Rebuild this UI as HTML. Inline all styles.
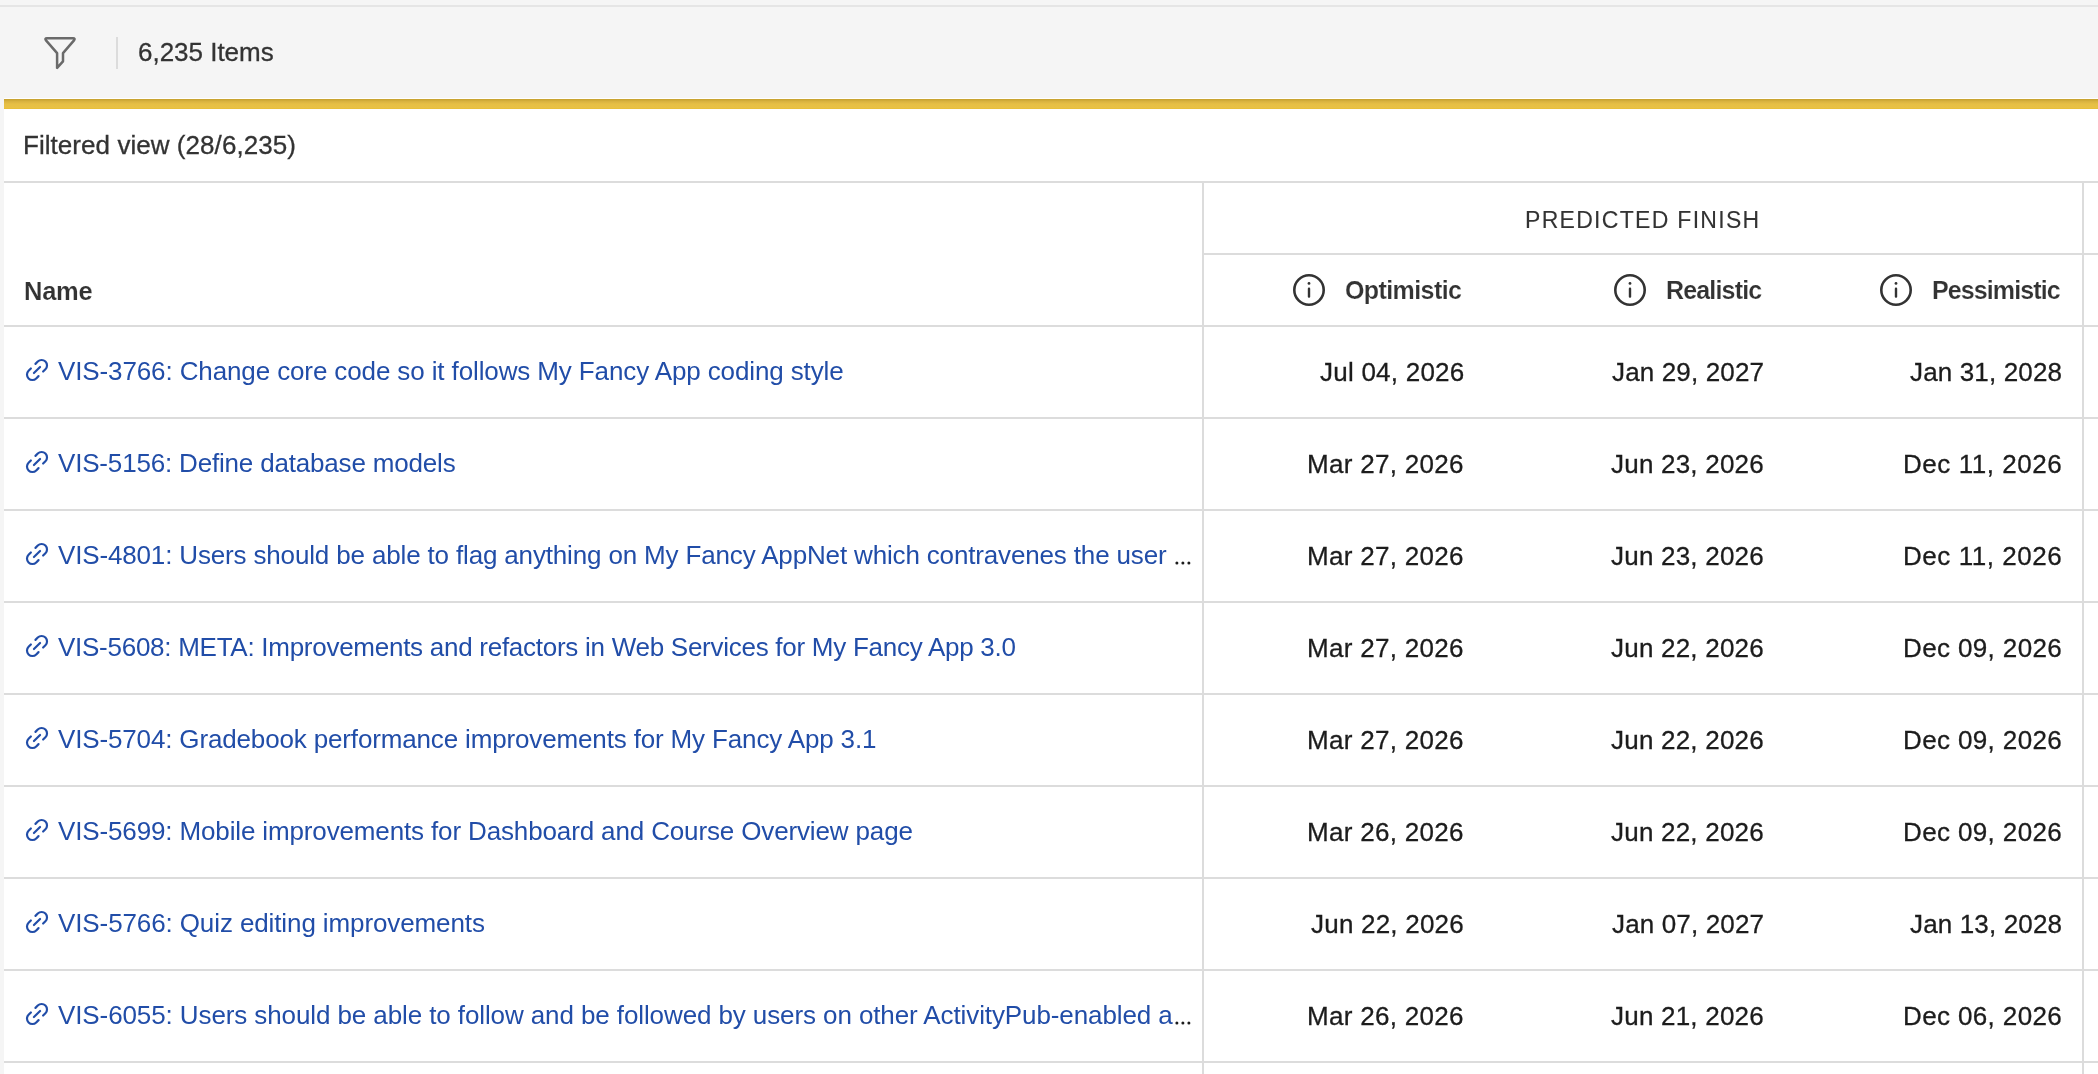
<!DOCTYPE html>
<html><head><meta charset="utf-8"><title>Items</title>
<style>
html,body{margin:0;padding:0}
body{width:2098px;height:1074px;overflow:hidden;position:relative;background:#f5f5f5;font-family:"Liberation Sans",sans-serif}
.t{will-change:transform;position:absolute;white-space:nowrap;line-height:40px;height:40px}
.h{position:absolute;right:0;height:2px;background:#dcdcdc}
.v{position:absolute;top:181px;bottom:0;width:2px;background:#dcdcdc}
.ic{position:absolute;display:block}
#topline{position:absolute;left:0;right:0;top:5px;height:2px;background:#e5e5e5}
#sep{position:absolute;left:116px;top:37px;width:2px;height:32px;background:#dcdcdc}
#panel{position:absolute;left:4px;right:0;top:98px;bottom:0;background:#fff}
#bar{position:absolute;left:4px;right:0;top:99px;height:10px;background:linear-gradient(#c5a02e 0,#d9b340 25%,#e6bf45 50%,#e9c245 90%,#e6bb33 100%)}
</style></head><body>
<div id="topline"></div>
<svg class="ic" style="left:40px;top:32px" width="40" height="40" viewBox="40 32 40 40" fill="none" stroke="#6a6a6a" stroke-width="2.5" stroke-linejoin="round" stroke-linecap="round"><path d="M47 38.3H73Q75.6 38.3 74 40.4L63 53.1V61.3L57.1 67.9V53.1L46 40.4Q44.4 38.3 47 38.3Z"/></svg>
<div id="sep"></div>
<div id="panel"></div>
<div id="bar"></div>
<div class="h" style="top:181px;left:4px"></div><div class="h" style="top:325px;left:4px"></div><div class="h" style="top:417px;left:4px"></div><div class="h" style="top:509px;left:4px"></div><div class="h" style="top:601px;left:4px"></div><div class="h" style="top:693px;left:4px"></div><div class="h" style="top:785px;left:4px"></div><div class="h" style="top:877px;left:4px"></div><div class="h" style="top:969px;left:4px"></div><div class="h" style="top:1061px;left:4px"></div><div class="h" style="top:253px;left:1202px"></div>
<div class="v" style="left:1202px"></div><div class="v" style="left:2082px"></div>
<svg class="ic" style="left:1172px;top:558.65px" width="22" height="8" viewBox="0 0 22 8" fill="#1c1c1c"><circle cx="4.9" cy="4" r="1.5"/><circle cx="10.9" cy="4" r="1.5"/><circle cx="16.9" cy="4" r="1.5"/></svg><svg class="ic" style="left:1172px;top:1018.65px" width="22" height="8" viewBox="0 0 22 8" fill="#1c1c1c"><circle cx="4.9" cy="4" r="1.5"/><circle cx="10.9" cy="4" r="1.5"/><circle cx="16.9" cy="4" r="1.5"/></svg><svg class="ic" style="left:1290.8px;top:271.8px" width="36" height="36" viewBox="0 0 36 36"><circle cx="18" cy="18" r="14.7" fill="none" stroke="#333" stroke-width="2.6"/><circle cx="18" cy="11.4" r="1.4" fill="#333"/><rect x="16.8" y="15.6" width="2.4" height="10.2" rx="1.1" fill="#333"/></svg><svg class="ic" style="left:1612.3px;top:271.8px" width="36" height="36" viewBox="0 0 36 36"><circle cx="18" cy="18" r="14.7" fill="none" stroke="#333" stroke-width="2.6"/><circle cx="18" cy="11.4" r="1.4" fill="#333"/><rect x="16.8" y="15.6" width="2.4" height="10.2" rx="1.1" fill="#333"/></svg><svg class="ic" style="left:1878.0px;top:271.8px" width="36" height="36" viewBox="0 0 36 36"><circle cx="18" cy="18" r="14.7" fill="none" stroke="#333" stroke-width="2.6"/><circle cx="18" cy="11.4" r="1.4" fill="#333"/><rect x="16.8" y="15.6" width="2.4" height="10.2" rx="1.1" fill="#333"/></svg><svg class="ic" style="left:24px;top:357.0px" width="26" height="26" viewBox="0 0 24 24" fill="none" stroke="#214da8" stroke-width="2.0" stroke-linecap="round" stroke-linejoin="round"><g transform="rotate(-45 12 12)"><path d="M15 7h3a5 5 0 0 1 0 10h-3M9 17H6a5 5 0 0 1 0-10h3"/><path d="M8 12h8"/></g></svg><svg class="ic" style="left:24px;top:449.0px" width="26" height="26" viewBox="0 0 24 24" fill="none" stroke="#214da8" stroke-width="2.0" stroke-linecap="round" stroke-linejoin="round"><g transform="rotate(-45 12 12)"><path d="M15 7h3a5 5 0 0 1 0 10h-3M9 17H6a5 5 0 0 1 0-10h3"/><path d="M8 12h8"/></g></svg><svg class="ic" style="left:24px;top:541.0px" width="26" height="26" viewBox="0 0 24 24" fill="none" stroke="#214da8" stroke-width="2.0" stroke-linecap="round" stroke-linejoin="round"><g transform="rotate(-45 12 12)"><path d="M15 7h3a5 5 0 0 1 0 10h-3M9 17H6a5 5 0 0 1 0-10h3"/><path d="M8 12h8"/></g></svg><svg class="ic" style="left:24px;top:633.0px" width="26" height="26" viewBox="0 0 24 24" fill="none" stroke="#214da8" stroke-width="2.0" stroke-linecap="round" stroke-linejoin="round"><g transform="rotate(-45 12 12)"><path d="M15 7h3a5 5 0 0 1 0 10h-3M9 17H6a5 5 0 0 1 0-10h3"/><path d="M8 12h8"/></g></svg><svg class="ic" style="left:24px;top:725.0px" width="26" height="26" viewBox="0 0 24 24" fill="none" stroke="#214da8" stroke-width="2.0" stroke-linecap="round" stroke-linejoin="round"><g transform="rotate(-45 12 12)"><path d="M15 7h3a5 5 0 0 1 0 10h-3M9 17H6a5 5 0 0 1 0-10h3"/><path d="M8 12h8"/></g></svg><svg class="ic" style="left:24px;top:817.0px" width="26" height="26" viewBox="0 0 24 24" fill="none" stroke="#214da8" stroke-width="2.0" stroke-linecap="round" stroke-linejoin="round"><g transform="rotate(-45 12 12)"><path d="M15 7h3a5 5 0 0 1 0 10h-3M9 17H6a5 5 0 0 1 0-10h3"/><path d="M8 12h8"/></g></svg><svg class="ic" style="left:24px;top:909.0px" width="26" height="26" viewBox="0 0 24 24" fill="none" stroke="#214da8" stroke-width="2.0" stroke-linecap="round" stroke-linejoin="round"><g transform="rotate(-45 12 12)"><path d="M15 7h3a5 5 0 0 1 0 10h-3M9 17H6a5 5 0 0 1 0-10h3"/><path d="M8 12h8"/></g></svg><svg class="ic" style="left:24px;top:1001.0px" width="26" height="26" viewBox="0 0 24 24" fill="none" stroke="#214da8" stroke-width="2.0" stroke-linecap="round" stroke-linejoin="round"><g transform="rotate(-45 12 12)"><path d="M15 7h3a5 5 0 0 1 0 10h-3M9 17H6a5 5 0 0 1 0-10h3"/><path d="M8 12h8"/></g></svg>
<span class="t" style="left:137.80px;top:32.00px;font-size:26px;font-weight:400;color:#333333;-webkit-text-stroke:0.3px #333333;letter-spacing:-0.016px">6,235 Items</span><span class="t" style="left:23.10px;top:125.00px;font-size:26px;font-weight:400;color:#333333;-webkit-text-stroke:0.3px #333333;letter-spacing:0.051px">Filtered view (28/6,235)</span><span class="t" style="left:24.00px;top:271.00px;font-size:25.5px;font-weight:700;color:#333333;-webkit-text-stroke:0.15px #fff;letter-spacing:-0.290px">Name</span><span class="t" style="left:1525.30px;top:200.00px;font-size:23px;font-weight:400;color:#333333;-webkit-text-stroke:0.1px #333333;letter-spacing:1.301px">PREDICTED FINISH</span><span class="t" style="left:1344.60px;top:270.00px;font-size:25px;font-weight:700;color:#333333;-webkit-text-stroke:0.15px #fff;letter-spacing:-0.594px">Optimistic</span><span class="t" style="left:1665.50px;top:270.00px;font-size:25px;font-weight:700;color:#333333;-webkit-text-stroke:0.15px #fff;letter-spacing:-0.830px">Realistic</span><span class="t" style="left:1931.50px;top:270.00px;font-size:25px;font-weight:700;color:#333333;-webkit-text-stroke:0.15px #fff;letter-spacing:-0.899px">Pessimistic</span><span class="t" style="left:58.20px;top:351.00px;font-size:26px;font-weight:400;color:#214da8;letter-spacing:-0.119px">VIS-3766: Change core code so it follows My Fancy App coding style</span><span class="t" style="left:1319.50px;top:352.00px;font-size:26px;font-weight:400;color:#1c1c1c;-webkit-text-stroke:0.3px #1c1c1c;letter-spacing:0.235px">Jul 04, 2026</span><span class="t" style="left:1611.50px;top:352.00px;font-size:26px;font-weight:400;color:#1c1c1c;-webkit-text-stroke:0.3px #1c1c1c;letter-spacing:0.146px">Jan 29, 2027</span><span class="t" style="left:1909.50px;top:352.00px;font-size:26px;font-weight:400;color:#1c1c1c;-webkit-text-stroke:0.3px #1c1c1c;letter-spacing:0.146px">Jan 31, 2028</span><span class="t" style="left:58.20px;top:443.00px;font-size:26px;font-weight:400;color:#214da8;letter-spacing:-0.180px">VIS-5156: Define database models</span><span class="t" style="left:1307.40px;top:444.00px;font-size:26px;font-weight:400;color:#1c1c1c;-webkit-text-stroke:0.3px #1c1c1c;letter-spacing:0.286px">Mar 27, 2026</span><span class="t" style="left:1610.70px;top:444.00px;font-size:26px;font-weight:400;color:#1c1c1c;-webkit-text-stroke:0.3px #1c1c1c;letter-spacing:0.218px">Jun 23, 2026</span><span class="t" style="left:1902.70px;top:444.00px;font-size:26px;font-weight:400;color:#1c1c1c;-webkit-text-stroke:0.3px #1c1c1c;letter-spacing:0.546px">Dec 11, 2026</span><span class="t" style="left:58.20px;top:535.00px;font-size:26px;font-weight:400;color:#214da8;letter-spacing:-0.156px">VIS-4801: Users should be able to flag anything on My Fancy AppNet which contravenes the user</span><span class="t" style="left:1307.40px;top:536.00px;font-size:26px;font-weight:400;color:#1c1c1c;-webkit-text-stroke:0.3px #1c1c1c;letter-spacing:0.286px">Mar 27, 2026</span><span class="t" style="left:1610.70px;top:536.00px;font-size:26px;font-weight:400;color:#1c1c1c;-webkit-text-stroke:0.3px #1c1c1c;letter-spacing:0.218px">Jun 23, 2026</span><span class="t" style="left:1902.70px;top:536.00px;font-size:26px;font-weight:400;color:#1c1c1c;-webkit-text-stroke:0.3px #1c1c1c;letter-spacing:0.546px">Dec 11, 2026</span><span class="t" style="left:58.20px;top:627.00px;font-size:26px;font-weight:400;color:#214da8;letter-spacing:-0.267px">VIS-5608: META: Improvements and refactors in Web Services for My Fancy App 3.0</span><span class="t" style="left:1307.40px;top:628.00px;font-size:26px;font-weight:400;color:#1c1c1c;-webkit-text-stroke:0.3px #1c1c1c;letter-spacing:0.286px">Mar 27, 2026</span><span class="t" style="left:1610.70px;top:628.00px;font-size:26px;font-weight:400;color:#1c1c1c;-webkit-text-stroke:0.3px #1c1c1c;letter-spacing:0.218px">Jun 22, 2026</span><span class="t" style="left:1902.70px;top:628.00px;font-size:26px;font-weight:400;color:#1c1c1c;-webkit-text-stroke:0.3px #1c1c1c;letter-spacing:0.372px">Dec 09, 2026</span><span class="t" style="left:58.20px;top:719.00px;font-size:26px;font-weight:400;color:#214da8;letter-spacing:-0.150px">VIS-5704: Gradebook performance improvements for My Fancy App 3.1</span><span class="t" style="left:1307.40px;top:720.00px;font-size:26px;font-weight:400;color:#1c1c1c;-webkit-text-stroke:0.3px #1c1c1c;letter-spacing:0.286px">Mar 27, 2026</span><span class="t" style="left:1610.70px;top:720.00px;font-size:26px;font-weight:400;color:#1c1c1c;-webkit-text-stroke:0.3px #1c1c1c;letter-spacing:0.218px">Jun 22, 2026</span><span class="t" style="left:1902.70px;top:720.00px;font-size:26px;font-weight:400;color:#1c1c1c;-webkit-text-stroke:0.3px #1c1c1c;letter-spacing:0.372px">Dec 09, 2026</span><span class="t" style="left:58.20px;top:811.00px;font-size:26px;font-weight:400;color:#214da8;letter-spacing:-0.138px">VIS-5699: Mobile improvements for Dashboard and Course Overview page</span><span class="t" style="left:1307.40px;top:812.00px;font-size:26px;font-weight:400;color:#1c1c1c;-webkit-text-stroke:0.3px #1c1c1c;letter-spacing:0.286px">Mar 26, 2026</span><span class="t" style="left:1610.70px;top:812.00px;font-size:26px;font-weight:400;color:#1c1c1c;-webkit-text-stroke:0.3px #1c1c1c;letter-spacing:0.218px">Jun 22, 2026</span><span class="t" style="left:1902.70px;top:812.00px;font-size:26px;font-weight:400;color:#1c1c1c;-webkit-text-stroke:0.3px #1c1c1c;letter-spacing:0.372px">Dec 09, 2026</span><span class="t" style="left:58.20px;top:903.00px;font-size:26px;font-weight:400;color:#214da8;letter-spacing:-0.110px">VIS-5766: Quiz editing improvements</span><span class="t" style="left:1311.00px;top:904.00px;font-size:26px;font-weight:400;color:#1c1c1c;-webkit-text-stroke:0.3px #1c1c1c;letter-spacing:0.218px">Jun 22, 2026</span><span class="t" style="left:1611.50px;top:904.00px;font-size:26px;font-weight:400;color:#1c1c1c;-webkit-text-stroke:0.3px #1c1c1c;letter-spacing:0.146px">Jan 07, 2027</span><span class="t" style="left:1909.50px;top:904.00px;font-size:26px;font-weight:400;color:#1c1c1c;-webkit-text-stroke:0.3px #1c1c1c;letter-spacing:0.146px">Jan 13, 2028</span><span class="t" style="left:58.20px;top:995.00px;font-size:26px;font-weight:400;color:#214da8;letter-spacing:-0.102px">VIS-6055: Users should be able to follow and be followed by users on other ActivityPub-enabled a</span><span class="t" style="left:1307.40px;top:996.00px;font-size:26px;font-weight:400;color:#1c1c1c;-webkit-text-stroke:0.3px #1c1c1c;letter-spacing:0.286px">Mar 26, 2026</span><span class="t" style="left:1610.70px;top:996.00px;font-size:26px;font-weight:400;color:#1c1c1c;-webkit-text-stroke:0.3px #1c1c1c;letter-spacing:0.218px">Jun 21, 2026</span><span class="t" style="left:1902.70px;top:996.00px;font-size:26px;font-weight:400;color:#1c1c1c;-webkit-text-stroke:0.3px #1c1c1c;letter-spacing:0.372px">Dec 06, 2026</span>
</body></html>
